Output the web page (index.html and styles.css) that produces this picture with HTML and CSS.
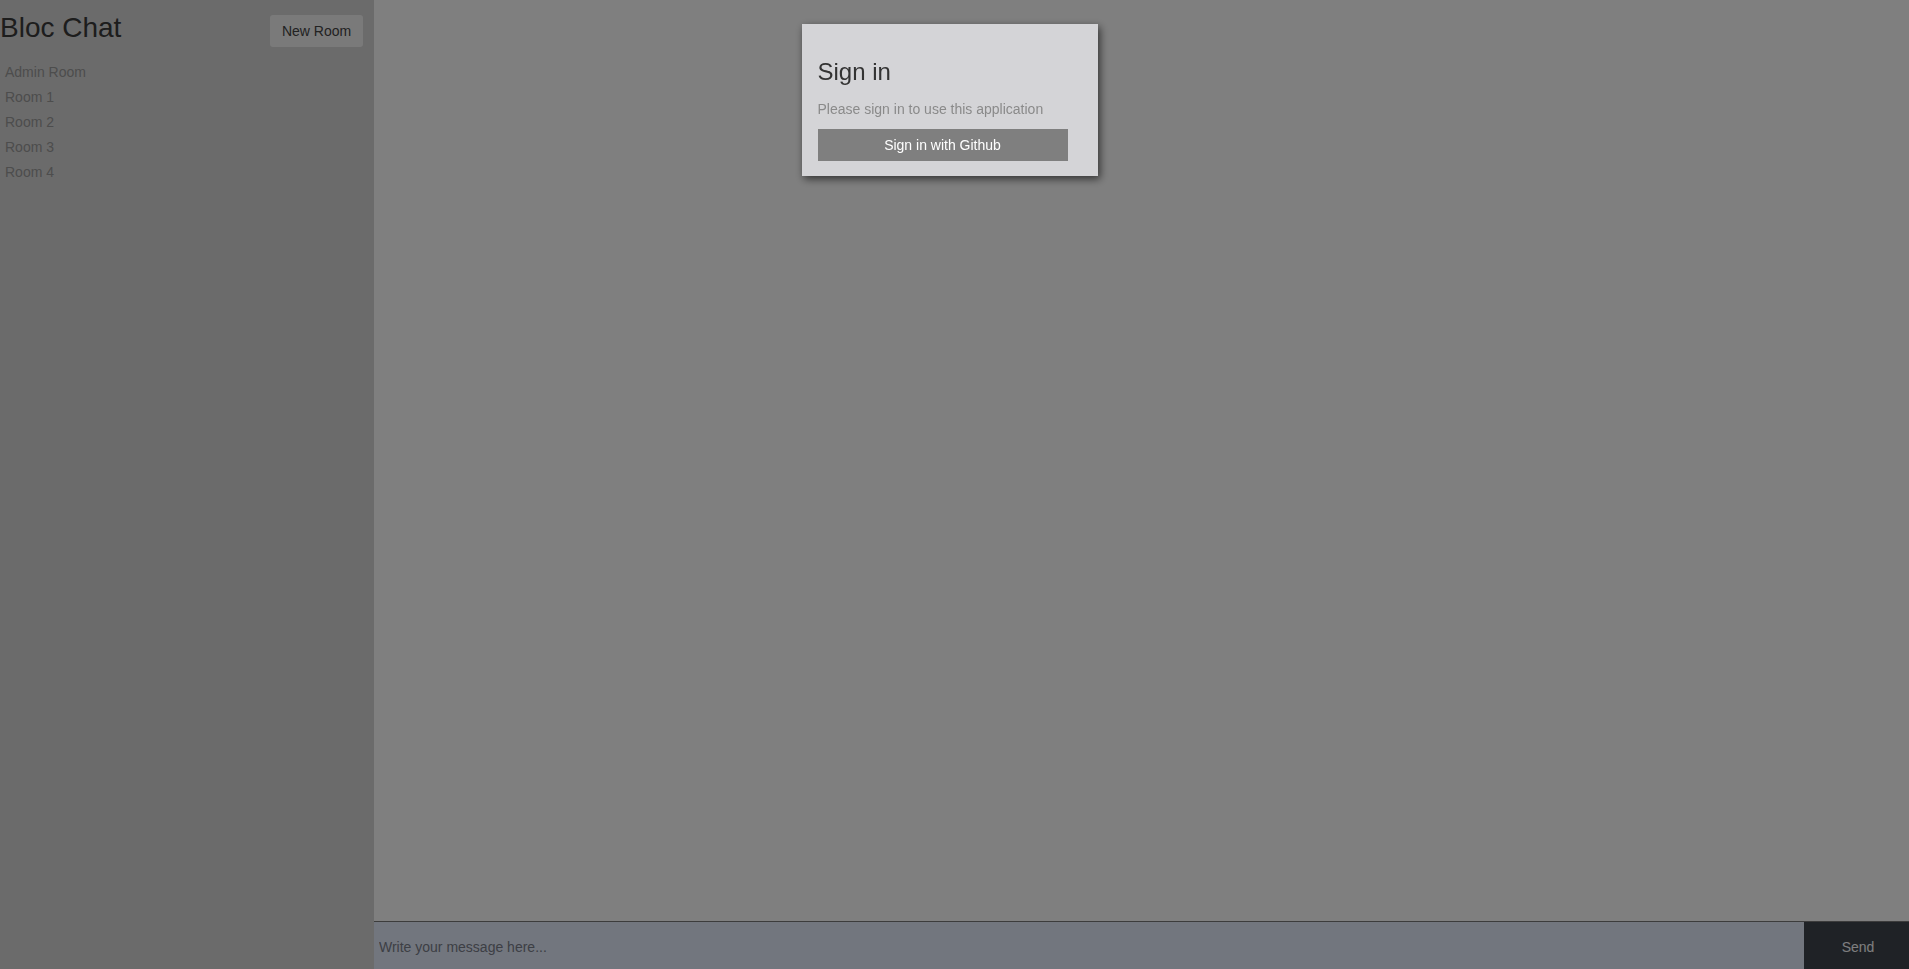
FILE: index.html
```html
<!DOCTYPE html>
<html lang="en">
<head>
<meta charset="utf-8">
<title>Bloc Chat</title>
<link rel="stylesheet" href="styles.css">
</head>
<body>
<div class="app">
  <aside class="sidebar">
    <div class="sidebar-head">
      <h1 class="brand">Bloc Chat</h1>
      <button class="new-room">New Room</button>
    </div>
    <ul class="rooms">
      <li>Admin Room</li>
      <li>Room 1</li>
      <li>Room 2</li>
      <li>Room 3</li>
      <li>Room 4</li>
    </ul>
  </aside>
  <main class="main">
    <div class="messages"></div>
    <form class="composer">
      <input class="composer-input" type="text" placeholder="Write your message here...">
      <button class="send" type="button">Send</button>
    </form>
  </main>
</div>
<div class="backdrop">
  <div class="modal">
    <h2 class="modal-title">Sign in</h2>
    <p class="modal-text">Please sign in to use this application</p>
    <button class="github-btn">Sign in with Github</button>
  </div>
</div>
</body>
</html>
```
FILE: styles.css
```css
* { box-sizing: border-box; }
html, body { margin: 0; padding: 0; height: 100%; }
body {
  font-family: "Liberation Sans", Arial, sans-serif;
  font-size: 14px;
  background: #ffffff;
  overflow: hidden;
}
.app {
  display: flex;
  height: 100vh;
}
.sidebar {
  width: 374px;
  flex: 0 0 374px;
  background: #d6d6d6;
}
.sidebar-head {
  display: flex;
  justify-content: space-between;
  align-items: flex-start;
  padding-right: 11px;
}
.brand {
  margin: 0;
  padding-top: 12px;
  font-size: 28px;
  font-weight: normal;
  line-height: 32px;
  color: #3a3a3a;
}
.new-room {
  margin-top: 15px;
  height: 32px;
  width: 93px;
  border: none;
  border-radius: 3px;
  background: #f4f4f4;
  color: #444444;
  font-family: inherit;
  font-size: 14px;
  padding: 0;
}
.rooms {
  list-style: none;
  margin: 0;
  padding: 13px 0 0 5px;
}
.rooms li {
  font-size: 14px;
  line-height: 25px;
  color: #9a9a9a;
}
.main {
  flex: 1;
  display: flex;
  flex-direction: column;
  background: #ffffff;
}
.messages { flex: 1; }
.composer {
  display: flex;
  height: 48px;
  margin: 0;
  border-top: 1px solid #787878;
}
.composer-input {
  flex: 1;
  border: none;
  background: #e4ecfc;
  font-family: inherit;
  font-size: 14px;
  padding: 2px 5px 0;
  outline: none;
  color: #333;
}
.composer-input::placeholder { color: #7a7e8a; }
.send {
  width: 105px;
  border: none;
  background: #3e444c;
  color: #fcfdff;
  font-family: inherit;
  font-size: 14px;
  padding: 2px 0 0 3px;
}
.backdrop {
  position: fixed;
  inset: 0;
  background: rgba(0, 0, 0, 0.5);
  display: flex;
  justify-content: center;
  align-items: flex-start;
}
.modal {
  margin: 24px 10px 0 0;
  width: 296px;
  background: #d4d4d7;
  padding: 34px 16px 15px;
  box-shadow: 2px 3px 8px rgba(0, 0, 0, 0.6);
}
.modal-title {
  margin: 0;
  font-size: 24px;
  font-weight: normal;
  line-height: 28px;
  color: #333333;
}
.modal-text {
  margin: 15px 0 12px;
  font-size: 14px;
  line-height: 16px;
  color: #8a8a8a;
}
.github-btn {
  display: block;
  width: 250px;
  height: 32px;
  border: none;
  background: #7f7f7f;
  color: #ffffff;
  font-family: inherit;
  font-size: 14px;
  padding: 0;
}
```
